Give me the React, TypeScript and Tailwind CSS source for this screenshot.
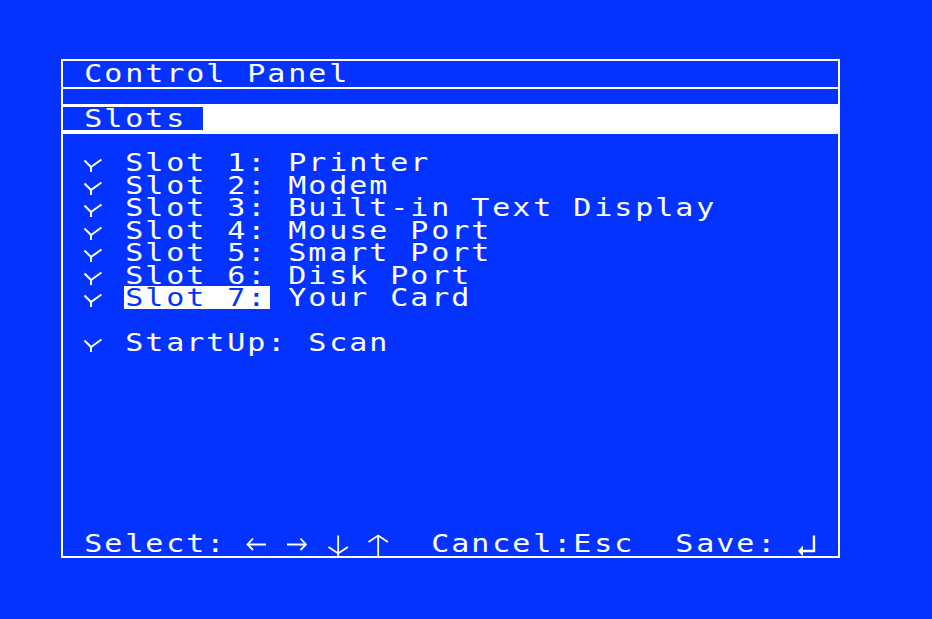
import React from 'react';

// text grid: every character sits in a 20.4 x 22.5 cell, like the IIgs text screen
function Glyph({ ch }: { ch: string }) {
  if (ch === '✓') {
    return (
      <svg width="20.4" height="22.5" viewBox="0 0 20.4 22.5" fill="none" stroke="currentColor" strokeWidth="2" className="block">
        <path d="M1.5 9.5L8 16V21M8 16L18.5 8.5" />
      </svg>
    );
  }
  if (ch === '←') {
    return (
      <svg width="20.4" height="22.5" viewBox="0 0 20.4 22.5" fill="none" stroke="currentColor" strokeWidth="1.8" className="block">
        <path d="M1.5 12.5H20M7 6.5L1.5 12.5L7 18" />
      </svg>
    );
  }
  if (ch === '→') {
    return (
      <svg width="20.4" height="22.5" viewBox="0 0 20.4 22.5" fill="none" stroke="currentColor" strokeWidth="1.8" className="block">
        <path d="M0 12.5H19M13.5 6.5L19 12.5L13.5 18" />
      </svg>
    );
  }
  if (ch === '↓') {
    return (
      <svg width="20.4" height="22.5" viewBox="0 0 20.4 22.5" fill="none" stroke="currentColor" strokeWidth="1.8" className="block overflow-visible">
        <path d="M10.2 3.5V25M0.5 15L10.2 21.5L19.9 15" />
      </svg>
    );
  }
  if (ch === '↑') {
    return (
      <svg width="20.4" height="22.5" viewBox="0 0 20.4 22.5" fill="none" stroke="currentColor" strokeWidth="1.8" className="block overflow-visible">
        <path d="M10.2 3.5V25M0.5 10L10.2 3.5L19.9 10" />
      </svg>
    );
  }
  if (ch === '↵') {
    return (
      <svg width="20.4" height="22.5" viewBox="0 0 20.4 22.5" fill="none" className="block overflow-visible">
        <path d="M17 3.5V19H5" stroke="currentColor" strokeWidth="2.4" />
        <path d="M1 19L6 13.5V24.5Z" fill="currentColor" />
      </svg>
    );
  }
  return <span className="inline-block translate-y-px scale-x-125">{ch}</span>;
}

function Cells({ text, className = '' }: { text: string; className?: string }) {
  return (
    <>
      {Array.from(text).map((ch, i) => (
        <div key={i} className={`h-[22.5px] w-[20.4px] shrink-0 text-center leading-[22.5px] whitespace-pre ${className}`}>
          <Glyph ch={ch} />
        </div>
      ))}
    </>
  );
}

function Row({ children, className = '' }: { children: React.ReactNode; className?: string }) {
  return <div className={`flex h-[22.5px] pl-[20px] ${className}`}>{children}</div>;
}

const slots = [
  'Printer',
  'Modem',
  'Built-in Text Display',
  'Mouse Port',
  'Smart Port',
  'Disk Port',
];

export default function App() {
  return (
    <div className="h-[619px] w-full overflow-hidden bg-[#0433ff] pl-[61px] pt-[59px] font-['DejaVu_Sans_Mono',monospace] text-[24px] text-white">
      <div className="flex h-[499px] w-[779px] flex-col border-2 border-white">
        {/* title */}
        <div className="h-[26px] pt-[1px]">
          <Row>
            <Cells text="Control Panel" />
          </Row>
        </div>
        <div className="h-[2px] bg-white" />
        <div className="h-[15px]" />

        {/* tab band */}
        <div className="h-[30px] bg-white pt-[3px]">
          <div className="h-[23px] w-[140px] bg-[#0433ff]">
            <Row>
              <Cells text="Slots" />
            </Row>
          </div>
        </div>

        <div className="mt-[17px]">
          {slots.map((name, i) => (
            <Row key={name}>
              <Cells text={`✓ Slot ${i + 1}: ${name}`} />
            </Row>
          ))}
          <Row>
            <Cells text="✓ " />
            <div className="mr-[-3px] flex bg-white pr-[3px] text-[#0433ff]">
              <Cells text="Slot 7:" />
            </div>
            <Cells text=" Your Card" />
          </Row>
          <div className="h-[22.5px]" />
          <Row>
            <Cells text="✓ StartUp: Scan" />
          </Row>
        </div>

        <div className="flex-1" />

        <Row className="mb-[2px]">
          <Cells text="Select: ← → ↓ ↑  Cancel:Esc  Save: ↵" />
        </Row>
      </div>
    </div>
  );
}
